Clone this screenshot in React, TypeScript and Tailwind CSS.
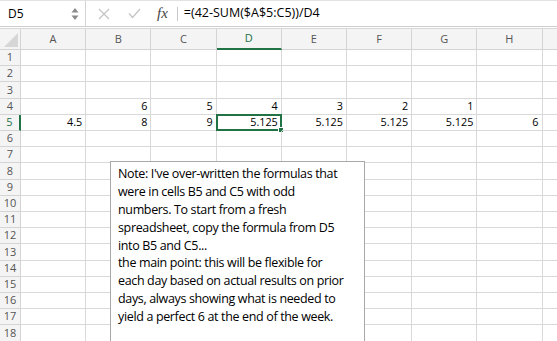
import React from 'react';

const cols = ['A', 'B', 'C', 'D', 'E', 'F', 'G', 'H'];
const data: Record<number, Record<string, string>> = {
  4: { B: '6', C: '5', D: '4', E: '3', F: '2', G: '1' },
  5: { A: '4.5', B: '8', C: '9', D: '5.125', E: '5.125', F: '5.125', G: '5.125', H: '6' },
};
const tall = [3, 8, 13, 18];
const rows = Array.from({ length: 18 }, (_, i) => i + 1);

const noteLines = [
  "Note: I've over-written the formulas that",
  'were in cells B5 and C5 with odd',
  'numbers. To start from a fresh',
  'spreadsheet, copy the formula from D5',
  'into B5 and C5...',
  'the main point: this will be flexible for',
  'each day based on actual results on prior',
  'days, always showing what is needed to',
  'yield a perfect 6 at the end of the week.',
];

export default function App() {
  return (
    <div className="relative w-[557px] h-[341px] overflow-hidden bg-white text-black" style={{ fontFamily: '"Open Sans", "Noto Sans", sans-serif' }}>
      {/* formula bar */}
      <div className="flex h-[27px] items-center border-b border-[#cdcdcd] border-t border-t-[#e2e2e2]">
        <div className="flex h-full w-[86px] items-center justify-between border-r border-[#d4d4d4] pl-[8px] pr-[6px]">
          <span className="text-[12px]">D5</span>
          <svg width="8" height="14" viewBox="0 0 8 14">
            <polygon points="4,1 7.5,5.5 0.5,5.5" fill="#8a8a8a" />
            <polygon points="4,13 7.5,8.5 0.5,8.5" fill="#8a8a8a" />
          </svg>
        </div>
        <svg className="ml-[12px]" width="12" height="12" viewBox="0 0 12 12">
          <path d="M1 1 L11 11 M11 1 L1 11" stroke="#c4c4c4" strokeWidth="1.3" fill="none" />
        </svg>
        <svg className="ml-[18px]" width="13" height="11" viewBox="0 0 13 11">
          <path d="M1 5.5 L4.5 9.5 L12 1" stroke="#c4c4c4" strokeWidth="1.3" fill="none" />
        </svg>
        <span className="ml-[16px] text-[15px] italic text-[#444]" style={{ fontFamily: '"Liberation Serif", serif' }}>fx</span>
        <div className="ml-[9px] h-[14px] w-px bg-[#c8c8c8]" />
        <span className="ml-[6px] text-[12.5px]">=(42-SUM($A$5:C5))/D4</span>
      </div>
      <div className="h-[1px]" />
      {/* column header */}
      <div className="flex h-[22px] border-t border-[#d8d8d8] bg-[#f4f4f4]">
        <div className="relative w-[21px] shrink-0 border-r border-b border-[#d4d4d4]">
          <svg className="absolute right-[2px] bottom-[2px]" width="14" height="14" viewBox="0 0 14 14">
            <polygon points="14,0 14,14 0,14" fill="#d6d6d6" />
          </svg>
        </div>
        {cols.map((c) => (
          <div
            key={c}
            className={
              c === 'D'
                ? 'flex w-[65.2px] shrink-0 items-center justify-center border-r border-[#d4d4d4] border-b-2 border-b-[#217346] text-[11px] text-[#217346]'
                : 'flex w-[65.2px] shrink-0 items-center justify-center border-r border-b border-[#d4d4d4] text-[11px] text-[#555]'
            }
          >
            {c}
          </div>
        ))}
        <div className="flex-1 border-b border-[#d4d4d4]" />
      </div>
      {/* rows */}
      {rows.map((r) => (
        <div key={r} className={tall.includes(r) ? 'flex h-[17px]' : 'flex h-[16px]'}>
          <div
            className={
              r === 5
                ? 'flex w-[21px] shrink-0 items-center justify-center border-b border-[#d4d4d4] border-r-2 border-r-[#217346] bg-[#f4f4f4] text-[11px] text-[#217346]'
                : 'flex w-[21px] shrink-0 items-center justify-center border-r border-b border-[#d4d4d4] bg-[#f4f4f4] text-[11px] text-[#555]'
            }
          >
            {r}
          </div>
          {cols.map((c) => (
            <div key={c} className="relative flex w-[65.2px] shrink-0 items-center justify-end border-r border-b border-[#d9d9d9] pr-[3px] text-[10.8px]">
              {data[r]?.[c] ?? ''}
              {r === 5 && c === 'D' && (
                <div className="absolute left-[-1px] top-[-1px] right-[-1px] bottom-[-1px] border-2 border-[#217346]">
                  <div className="absolute right-[-4px] bottom-[-4px] h-[6px] w-[6px] border border-white bg-[#217346]" />
                </div>
              )}
            </div>
          ))}
          <div className="flex-1 border-b border-[#d9d9d9]" />
        </div>
      ))}
      {/* note */}
      <div className="absolute left-[110px] top-[161px] h-[200px] w-[255px] border border-[#a8a8a8] bg-white pl-[7px] pt-[3px]">
        {noteLines.map((l, i) => (
          <div key={i} className="h-[17.9px] whitespace-nowrap text-[12.5px] leading-[17.9px] tracking-[-0.35px]">
            {l}
          </div>
        ))}
      </div>
    </div>
  );
}
